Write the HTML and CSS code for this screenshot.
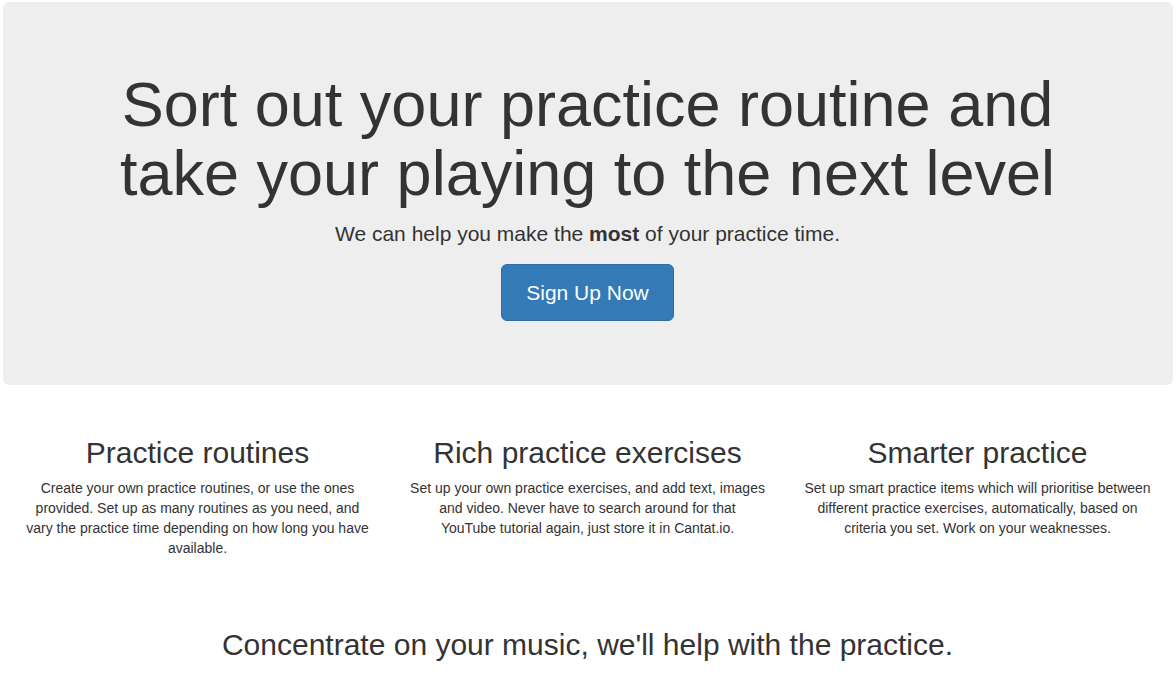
FILE: index.html
```html
<!DOCTYPE html>
<html lang="en">
<head>
    <meta charset="UTF-8">
    <meta name="viewport" content="width=device-width, initial-scale=1.0">
    <title>Cantat.io</title>
    <link rel="stylesheet" href="styles.css">
</head>
<body>
    <div class="container">
        <div class="jumbotron">
            <h1>Sort out your practice routine and take your playing to the next level</h1>
            <p>We can help you make the <strong>most</strong> of your practice time.</p>
            <p><a class="btn-signup" href="#">Sign Up Now</a></p>
        </div>

        <div class="features">
            <div class="feature">
                <h2>Practice routines</h2>
                <p>Create your own practice routines, or use the ones provided. Set up as many routines as you need, and<br>vary the practice time depending on how long you have available.</p>
            </div>
            <div class="feature">
                <h2>Rich practice exercises</h2>
                <p>Set up your own practice exercises, and add text, images and video. Never have to search around for that<br>YouTube tutorial again, just store it in Cantat.io.</p>
            </div>
            <div class="feature">
                <h2>Smarter practice</h2>
                <p>Set up smart practice items which will prioritise between different practice exercises, automatically, based on criteria you set. Work on your weaknesses.</p>
            </div>
        </div>

        <h2 class="tagline">Concentrate on your music, we'll help with the practice.</h2>
    </div>
</body>
</html>
```

FILE: styles.css
```css
body {
    font-family: "Liberation Sans", Arial, sans-serif;
    font-size: 14px;
    line-height: 20px;
    color: #333;
    background-color: #fff;
    margin: 0;
    padding: 0;
}

.container {
    width: 1170px;
    margin: 0 auto;
    padding-top: 2px;
}

.jumbotron {
    background-color: #eee;
    border-radius: 6px;
    padding: 48px 60px 49px;
    margin-bottom: 30px;
    text-align: center;
}

.jumbotron h1 {
    font-size: 63px;
    font-weight: normal;
    line-height: 1.1;
    margin: 20px 0 10px;
}

.jumbotron p {
    font-size: 21px;
    line-height: 30px;
    margin: 0 0 15px;
}

.btn-signup {
    display: inline-block;
    vertical-align: middle;
    background-color: #337ab7;
    border: 1px solid #2e6da4;
    border-radius: 6px;
    color: #fff;
    font-size: 21px;
    line-height: 29px;
    padding: 13px 24px;
    text-decoration: none;
}

.btn-signup:hover {
    background-color: #286090;
}

.features {
    display: grid;
    grid-template-columns: repeat(3, 1fr);
    text-align: center;
}

.feature {
    padding: 0 15px;
}

.feature h2 {
    font-size: 30px;
    font-weight: normal;
    line-height: 1.1;
    margin: 21px 0 9px;
}

.feature p {
    margin: 0 0 10px;
}

.tagline {
    font-size: 30px;
    font-weight: normal;
    line-height: 1.1;
    text-align: center;
    margin: 60px 0 10px;
}
```
